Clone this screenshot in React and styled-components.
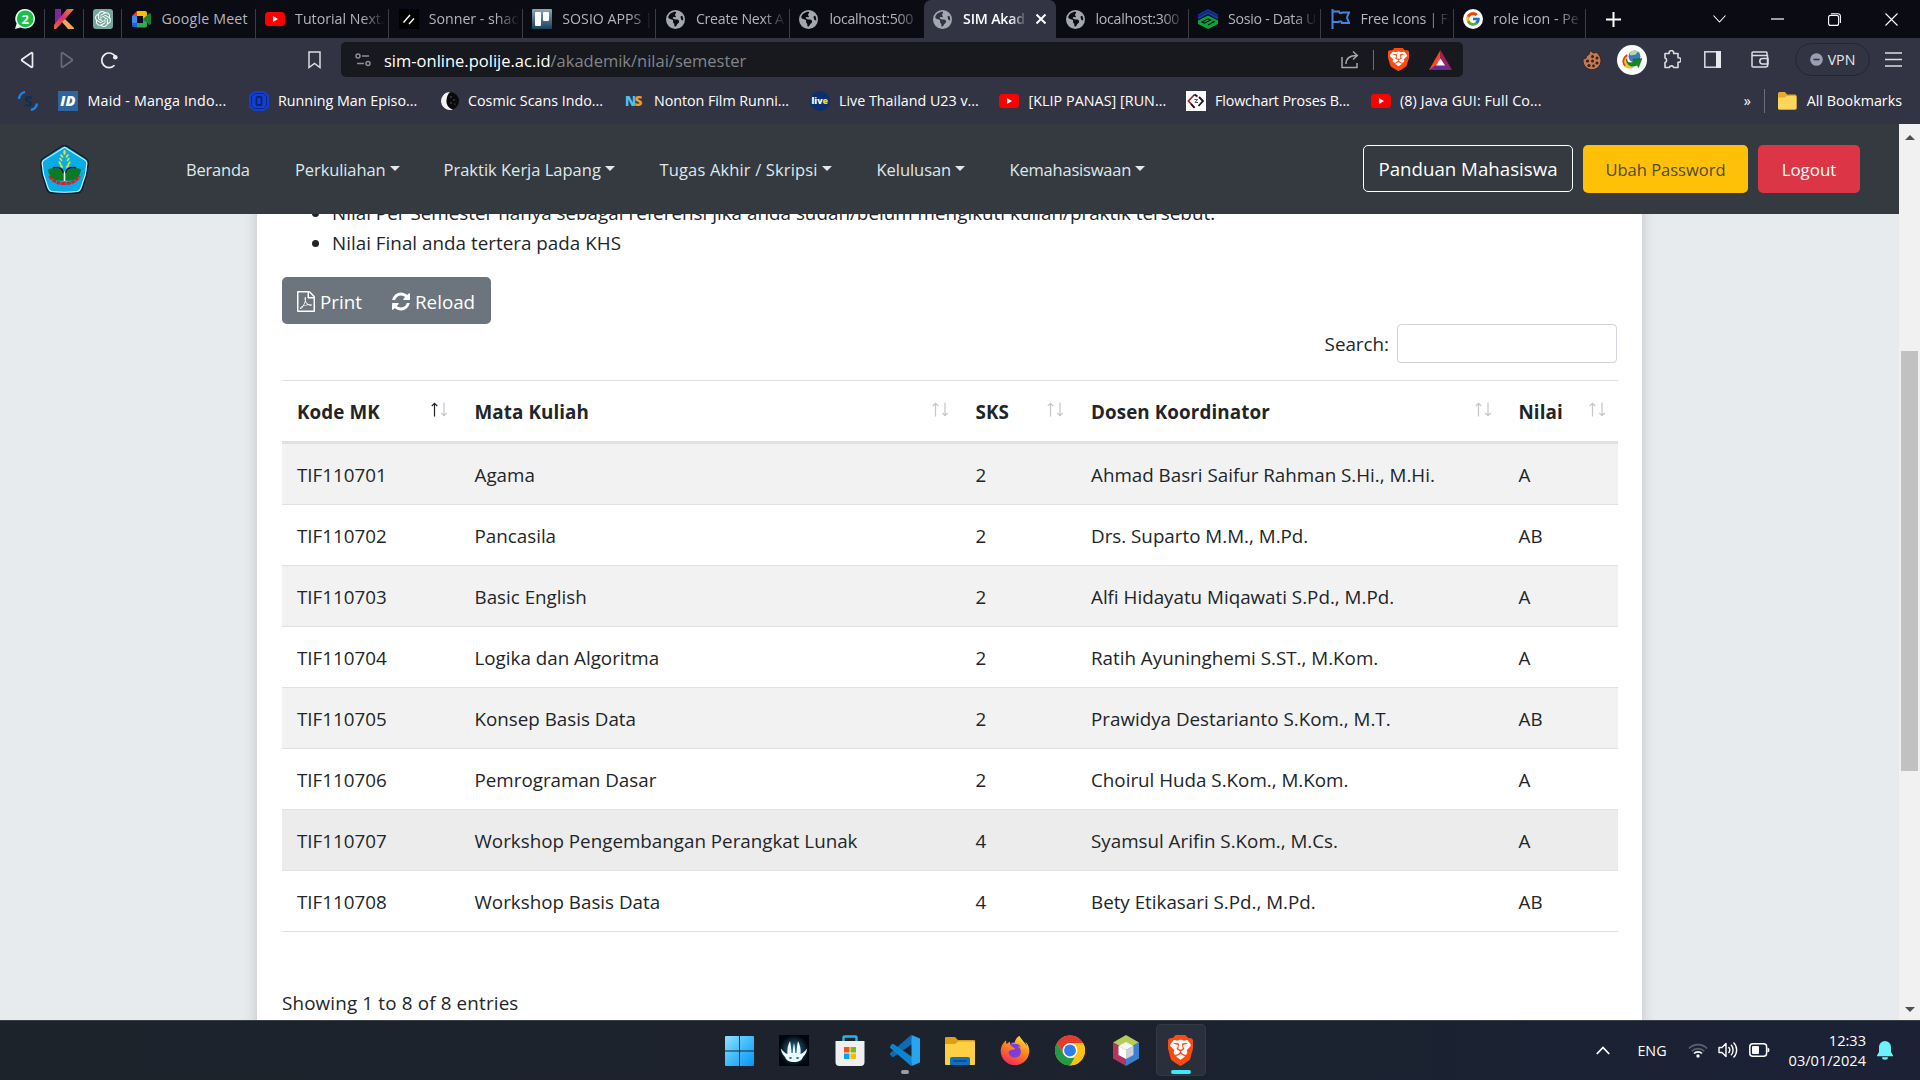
import React from "react";
import styled, { createGlobalStyle, css } from "styled-components";
import { FcGoogle } from "react-icons/fc";
import { FaEarthAmericas, FaFirefoxBrowser } from "react-icons/fa6";
import { SiBrave, SiOpenai } from "react-icons/si";

const Global = createGlobalStyle`
  * { box-sizing: border-box; }
  body { margin: 0; background: #e8ebee; overflow: hidden; }
  svg { display: block; flex: none; }
`;

const font = `"Open Sans", "Noto Sans", sans-serif`;

const Screen = styled.div`
  width: 1920px;
  height: 1080px;
  display: flex;
  flex-direction: column;
  font-family: ${font};
  overflow: hidden;
  white-space: nowrap;
`;

/* ---------- tab strip ---------- */
const TabStrip = styled.div`
  height: 38px;
  flex: none;
  background: #0b0b14;
  display: flex;
  align-items: stretch;
`;
const PinnedTab = styled.div`
  width: ${(p) => p.$w}px;
  padding-left: ${(p) => p.$pad}px;
  display: flex;
  align-items: center;
  background: linear-gradient(#3d3d46, #3d3d46) right bottom / 1px 29px no-repeat;
`;
const Tab = styled.div`
  width: ${(p) => p.$w}px;
  padding: 0 ${(p) => (p.$active ? 10 : 5)}px 0 9.5px;
  display: flex;
  align-items: center;
  gap: 10px;
  color: #b4b5bb;
  ${(p) =>
    p.$active
      ? css`
          background: #323443;
          border-radius: 7px 7px 0 0;
          color: #fff;
          font-weight: 600;
        `
      : p.$plain
      ? ""
      : css`
          background: linear-gradient(#3d3d46, #3d3d46) right bottom / 1px 29px no-repeat;
        `}
`;
const TabIcon = styled.div`
  width: 20px;
  flex: none;
`;
const TabTitle = styled.span`
  flex: 1;
  min-width: 0;
  overflow: hidden;
  font-size: 14.2px;
  letter-spacing: ${(p) => p.$ls || 0}px;
  line-height: 20px;
  mask-image: ${(p) => (p.$whole ? "none" : "linear-gradient(90deg, #000 75%, transparent 102%)")};
`;
const WindowControls = styled.div`
  flex: 1;
  display: grid;
  grid-template-columns: 54px 1fr 57px 57px 57px;
  align-items: center;
  justify-items: center;
  color: #fff;
`;
const PushRight = styled.div`
  justify-self: end;
  padding-right: 23px;
`;

/* ---------- toolbar ---------- */
const Toolbar = styled.div`
  height: 43px;
  flex: none;
  background: #323443;
  display: flex;
  align-items: center;
  color: #e9e9ee;
  padding-left: 20px;
`;
const NavButtons = styled.div`
  display: flex;
  align-items: center;
  gap: 26px;
  width: 288px;
`;
const BookmarkHolder = styled.div`
  width: 33px;
  display: flex;
`;
const AddressBar = styled.div`
  width: 1122px;
  height: 35px;
  border-radius: 5px;
  background: #17191f;
  display: flex;
  align-items: center;
  padding: 0 11px 0 14px;
`;
const Url = styled.div`
  flex: 1;
  margin-left: 13px;
  padding-top: 1px;
  font-size: 16.5px;
  color: #83858a;
  b { font-weight: 400; color: #fff; }
`;
const AddressActions = styled.div`
  display: flex;
  align-items: center;
  color: #a5a6ac;
`;
const Divider = styled.i`
  width: 1px;
  height: ${(p) => p.$h}px;
  background: #6b6d78;
  margin: 0 ${(p) => p.$r}px 0 ${(p) => p.$l}px;
`;
const Extensions = styled.div`
  flex: 1;
  display: flex;
  align-items: center;
  padding-left: 119px;
`;
const Extension = styled.div`
  width: ${(p) => p.$w}px;
  display: flex;
  justify-content: center;
`;
const IdmBadge = styled.div`
  width: 30px;
  height: 30px;
  border-radius: 50%;
  background: #fff;
  display: flex;
  align-items: center;
  justify-content: center;
`;
const VpnPill = styled.div`
  width: 75px;
  height: 33px;
  margin-left: 16px;
  border-radius: 17px;
  border: 1px solid #232532;
  display: flex;
  align-items: center;
  justify-content: center;
  gap: 5px;
  font-size: 14.2px;
`;
const MenuButton = styled.div`
  margin-left: 15px;
`;

/* ---------- bookmarks ---------- */
const BookmarkBar = styled.div`
  height: 43px;
  flex: none;
  background: #323443;
  display: flex;
  align-items: center;
  padding: 0 18px 4px;
  color: #fff;
  font-size: 14.3px;
`;
const Bookmark = styled.div`
  width: ${(p) => p.$w}px;
  display: flex;
  align-items: center;
  gap: 9.5px;
  letter-spacing: ${(p) => p.$ls || 0}px;
`;
const BookmarkEnd = styled.div`
  margin-left: auto;
  display: flex;
  align-items: center;
`;
const FolderLabel = styled.span`
  margin-left: 10px;
`;

/* ---------- page ---------- */
const Viewport = styled.div`
  height: 896px;
  flex: none;
  display: flex;
  overflow: hidden;
`;
const Page = styled.div`
  flex: 1;
  display: flex;
  flex-direction: column;
  min-width: 0;
`;
const Navbar = styled.nav`
  height: 90px;
  flex: none;
  position: relative;
  z-index: 1;
  background: #343a40;
  display: flex;
  align-items: center;
  padding: 0 39px 0 39.5px;
`;
const NavLinks = styled.div`
  display: flex;
  flex: 1;
  margin-left: 97.5px;
  padding-top: 1px;
`;
const NavLink = styled.div`
  width: ${(p) => p.$w}px;
  display: flex;
  align-items: center;
  gap: 4px;
  font-size: 16.5px;
  color: #dfe8ec;
  letter-spacing: ${(p) => p.$ls || 0}px;
`;
const Caret = styled.i`
  border: 5px solid transparent;
  border-top-color: currentColor;
  border-bottom: 0;
  margin-top: -3px;
`;
const NavActions = styled.div`
  display: flex;
  gap: 10px;
`;
const NavButton = styled.div`
  width: ${(p) => p.$w}px;
  height: ${(p) => p.$h || 48}px;
  border-radius: 5px;
  display: flex;
  align-items: center;
  justify-content: center;
  font-size: ${(p) => p.$size || 16.5}px;
  background: ${(p) => p.$bg || "transparent"};
  color: ${(p) => p.$fg || "#fff"};
  border: ${(p) => (p.$outline ? "1px solid #fff" : "0")};
`;
const Main = styled.main`
  flex: 1;
  min-height: 0;
  background: #e8ebee;
  overflow: hidden;
  display: flex;
  justify-content: center;
`;
const Card = styled.section`
  width: 1385px;
  height: 860px;
  margin-top: -16px;
  padding: 0 24px 0 25px;
  background: #fff;
  box-shadow: 0 0 12px rgba(0, 0, 0, 0.18);
  color: #212529;
  font-size: 18.8px;
  line-height: 30px;
`;
const Notes = styled.ul`
  margin: 0 0 19px;
  padding-left: 50px;
  line-height: 30px;
  letter-spacing: 0.03px;
`;
const ButtonGroup = styled.div`
  width: 209px;
  height: 47px;
  border-radius: 5px;
  background: #6c757d;
  color: #fff;
  display: flex;
  align-items: center;
  padding: 2px 0 0 15px;
`;
const GroupButton = styled.div`
  width: ${(p) => p.$w}px;
  display: flex;
  align-items: center;
  gap: 5px;
`;
const SearchRow = styled.div`
  display: flex;
  justify-content: flex-end;
  align-items: center;
  gap: 8px;
`;
const SearchInput = styled.div`
  width: 220px;
  height: 39px;
  border: 1px solid #ced4da;
  border-radius: 4px;
  margin-right: 1px;
`;
const Table = styled.div`
  margin-top: 17px;
  border-top: 1px solid #dee2e6;
`;
const Row = styled.div`
  display: grid;
  grid-template-columns: 177.5px 501px 115.5px 427.5px 114.5px;
  align-items: center;
  height: ${(p) => (p.$head ? 63 : 61)}px;
  border-bottom: ${(p) => (p.$head ? 3 : 1)}px solid #dee2e6;
  background: ${(p) => p.$bg || "#fff"};
  font-weight: ${(p) => (p.$head ? 700 : 400)};
  letter-spacing: ${(p) => (p.$head ? 0.1 : 0)}px;
`;
const Cell = styled.div`
  padding: 1px 12px 0 15px;
  display: flex;
  justify-content: space-between;
  align-items: center;
`;
const Summary = styled.div`
  margin-top: 56px;
  letter-spacing: 0.17px;
`;
const Scrollbar = styled.div`
  width: 21px;
  background: #f1f1f1;
  display: flex;
  flex-direction: column;
  align-items: center;
  justify-content: space-between;
  padding: 11px 0 8px;
`;
const Thumb = styled.div`
  width: 17px;
  height: 420px;
  margin-bottom: 25px;
  background: #c1c1c1;
`;
const Arrow = styled.i`
  border: 5px solid transparent;
  border-${(p) => (p.$up ? "bottom" : "top")}: 5px solid #505050;
  border-${(p) => (p.$up ? "top" : "bottom")}: 0;
`;

/* ---------- taskbar ---------- */
const Taskbar = styled.footer`
  height: 60px;
  flex: none;
  border-top: 1px solid #3a4048;
  background: linear-gradient(90deg, #1c232b 0%, #1d222c 45%, #1a2231 75%, #1c2136 100%);
  display: grid;
  grid-template-columns: 1fr auto 1fr;
  align-items: center;
  color: #fff;
`;
const Apps = styled.div`
  grid-column: 2;
  display: flex;
  gap: 5.2px;
`;
const AppButton = styled.div`
  width: 50px;
  height: 52px;
  margin-bottom: 1px;
  border-radius: 5px;
  display: flex;
  flex-direction: column;
  align-items: center;
  padding-top: 11px;
  background: ${(p) => (p.$active ? "#29303b" : "transparent")};
  box-shadow: ${(p) => (p.$active ? "inset 0 0 0 1px #333a45" : "none")};
`;
const Indicator = styled.i`
  width: ${(p) => p.$w}px;
  height: 4px;
  border-radius: 2px;
  margin-top: 4px;
  background: ${(p) => p.$c};
`;
const Tray = styled.div`
  display: flex;
  align-items: center;
  justify-content: flex-end;
  padding: 0 27px 1px 0;
  font-size: 14.3px;
`;
const TrayItem = styled.div`
  margin-right: ${(p) => p.$r}px;
`;
const Clock = styled.div`
  text-align: right;
  line-height: 20px;
  font-size: 14.6px;
  margin-right: 11px;
`;

/* ---------- drawings ---------- */
const YouTube = () => (
  <svg width="20" height="20" viewBox="0 0 20 20">
    <rect y="3" width="20" height="14" rx="3.500" fill="#f00" />
    <path d="M8 7v6l5-3z" fill="#fff" />
  </svg>
);
const GlobeIcon = () => <FaEarthAmericas size={19} color="#a3a7b0" />;
const WhatsApp = () => (
  <svg width="20" height="20" viewBox="0 0 20 20">
    <path d="M10.2 0a9.8 9.8 0 1 1-4.7 18.4L0 20l1.6-5.3A9.8 9.8 0 0 1 10.2 0z" fill="#eafff0" />
    <circle cx="10.2" cy="9.8" r="8.4" fill="#18c145" />
    <text x="10.2" y="14.6" textAnchor="middle" fontSize="13" fontWeight="700" fill="#fff" fontFamily="Open Sans">2</text>
  </svg>
);
const KLogo = () => (
  <svg width="20" height="20" viewBox="0 0 20 20">
    <defs>
      <linearGradient id="kg" x1="0" y1="1" x2="1" y2="0">
        <stop offset="0" stopColor="#f0603c" />
        <stop offset=".5" stopColor="#d6336c" />
        <stop offset="1" stopColor="#e8833a" />
      </linearGradient>
    </defs>
    <path d="M1 0h6v12l-6 6z" fill="#80259a" />
    <path d="M13 0h7L6 16l-4 4H0v-4z" fill="url(#kg)" />
    <path d="M11 10l9 9v1h-6L8 13z" fill="#f5a45c" />
  </svg>
);
const GptIcon = () => (
  <svg width="20" height="20" viewBox="0 0 20 20">
    <rect width="20" height="20" rx="3" fill="#74a99b" />
    <SiOpenai x="2" y="2" size={16} color="#fff" />
  </svg>
);
const MeetIcon = () => (
  <svg width="19" height="20" viewBox="0 0 19 20">
    <path d="M0 7l5-5v5z" fill="#ea4335" />
    <path d="M5 2h8a2 2 0 0 1 2 2v4l-4 3V7H5z" fill="#fbbc04" />
    <path d="M0 7h5v7H0z" fill="#4285f4" />
    <path d="M0 14h5v4H1.500A1.500 1.500 0 0 1 0 16.500z" fill="#1967d2" />
    <path d="M5 14h6v-4l4 3v4a1.500 1.500 0 0 1-1.500 1.500H5z" fill="#34a853" />
    <path d="M11 10l6-5.500c.8-.6 2-.2 2 .8v9.400c0 1-1.200 1.400-2 .8z" fill="#188038" />
  </svg>
);
const SonnerIcon = () => (
  <svg width="20" height="20" viewBox="0 0 20 20">
    <rect width="20" height="20" fill="#000" />
    <path d="M4.500 13.500l6.500-7.500M10 15l5-5.500" stroke="#fff" strokeWidth="1.400" />
  </svg>
);
const TrelloIcon = () => (
  <svg width="20" height="20" viewBox="0 0 20 20">
    <defs>
      <linearGradient id="tr" x1="0" y1="0" x2="0" y2="1">
        <stop offset="0" stopColor="#8aa9b8" />
        <stop offset="1" stopColor="#16435c" />
      </linearGradient>
    </defs>
    <rect width="20" height="20" rx="1" fill="url(#tr)" />
    <rect x="3" y="3" width="6" height="14" rx="1" fill="#fff" />
    <rect x="11" y="3" width="6" height="9" rx="1" fill="#fff" />
  </svg>
);
const SosioIcon = () => (
  <svg width="20" height="20" viewBox="0 0 20 20">
    <path d="M10 0l10 5.500v5L10 5 0 10.500v-5z" fill="#123aa5" />
    <path d="M0 7.500L10 2.300l10 5.200" fill="none" stroke="#0b1a55" strokeWidth=".8" />
    <path d="M10 6.500l10 5v3.500l-10 5-10-5v-3.500z" fill="#0aa63a" />
    <path d="M4 13l6-3.200 2.500 1.200-6 3.200zM10 16l6-3.200-1.500-.8" fill="none" stroke="#0b0b14" strokeWidth="1.200" />
  </svg>
);
const FlagIcon = () => (
  <svg width="19" height="20" viewBox="0 0 19 20" fill="none" stroke="#3f87e0" strokeWidth="2">
    <path d="M1.500 0v20M2 2.500h6c0 2 2 2 3 1h7l-2 5 2 5.500h-7c0-1.500-2-2-4-1H2" />
  </svg>
);
const GoogleIcon = () => (
  <svg width="20" height="20" viewBox="0 0 20 20">
    <circle cx="10" cy="10" r="10" fill="#fff" />
    <FcGoogle x="2" y="2" size={16} />
  </svg>
);
const BackIcon = ({ dim }) => (
  <svg width="14" height="18" viewBox="0 0 14 18" fill="none" stroke={dim ? "#686a76" : "#eeeef2"} strokeWidth="1.700" strokeLinejoin="round">
    <path d={dim ? "M1.500 2.500v13c0 .8.800 1 1.400.5l9-6.200c.6-.5.6-1.100 0-1.600l-9-6.200c-.6-.5-1.400-.3-1.400.5z" : "M12.500 2.500v13c0 .8-.8 1-1.400.5l-9-6.200c-.6-.5-.6-1.100 0-1.600l9-6.200c.6-.5 1.400-.3 1.400.5z"} />
  </svg>
);
const ReloadIcon = () => (
  <svg width="18" height="18" viewBox="0 0 18 18" fill="none" stroke="#eeeef2" strokeWidth="1.700">
    <path d="M14.500 14.200A7.300 7.300 0 1 1 15.600 6" />
    <circle cx="15.300" cy="6.300" r="2.300" fill="#eeeef2" stroke="none" />
  </svg>
);
const BookmarkIcon = () => (
  <svg width="13" height="18" viewBox="0 0 13 18" fill="none" stroke="#dcdce2" strokeWidth="1.500">
    <path d="M1 1h11v15.500l-5.500-4-5.500 4z" />
  </svg>
);
const SiteIcon = () => (
  <svg width="16" height="16" viewBox="0 0 16 16" fill="none" stroke="#8d8f96" strokeWidth="1.500">
    <circle cx="3" cy="4" r="2" />
    <circle cx="13" cy="11.500" r="2" />
    <path d="M7 4h7M2 11.500h7" />
  </svg>
);
const ShareIcon = () => (
  <svg width="18" height="19" viewBox="0 0 18 19" fill="none" stroke="#a5a6ac" strokeWidth="1.500">
    <path d="M1 7v10.500h15V13" />
    <path d="M5 14c0-6 4-8.500 11-8.500M12 1.500l4.300 4-4.300 4" />
  </svg>
);
const BraveShield = ({ w, h }) => (
  <svg width={w} height={h} viewBox="2.500 0 19 24" preserveAspectRatio="none">
    <path d="M7 2h10l4 5-3 12-6 4-6-4L3.500 7z" fill="#fff" />
    <SiBrave size={24} color="#fb4b12" />
  </svg>
);
const BatIcon = () => (
  <svg width="23" height="20" viewBox="0 0 23 20">
    <path d="M11.500 0L0 20l11.500-5z" fill="#ff4724" />
    <path d="M11.500 0L23 20l-11.500-5z" fill="#9e1f63" />
    <path d="M0 20h23l-7-5H7z" fill="#662d91" />
    <path d="M11.500 8.500L7 15.500h9z" fill="#fff" />
  </svg>
);
const CookieIcon = () => (
  <svg width="20" height="20" viewBox="0 0 20 20">
    <path d="M8 1c1.500-.5 1.500 2 4 2 2-.5 3-1 4.500 1.500A9 9 0 1 1 1 11c-.5-2 1-2 2.500-2.500S4 5 6 5s1-3.500 2-4z" fill="#c47b55" stroke="#35231e" />
    <g fill="#33211c">
      <circle cx="10.500" cy="6.500" r="1.500" /><circle cx="15" cy="8" r="1.500" /><circle cx="5.500" cy="11" r="1.600" />
      <circle cx="10.500" cy="11" r="1.500" /><circle cx="7" cy="15.500" r="1.600" /><circle cx="15" cy="13" r="1.600" /><circle cx="11.500" cy="16" r="1.400" />
    </g>
  </svg>
);
const IdmIcon = () => (
  <svg width="20" height="20" viewBox="0 0 20 20">
    <circle cx="12.500" cy="6.500" r="6" fill="#3f78b8" />
    <path d="M8 3c2-3 6-3 8-1-2 1-2 3-4 3s-2 1-4 0z" fill="#b9d7a5" />
    <path d="M6 4C0 7-1 13 3 17c3 2 7 2 9 0-4 0-8-4-6-13z" fill="#e8c227" />
    <path d="M5 5c-4 3-5 7-2 11" fill="none" stroke="#d8432b" strokeWidth="1.600" />
    <path d="M4.500 9c.5 4 4 5 8 2.500L11 9.500l9-1-3.500 9-1.500-2.500c-5 3-10.500.500-10.500-6z" fill="#14891f" stroke="#0b4f16" strokeWidth=".5" />
  </svg>
);
const PuzzleIcon = () => (
  <svg width="18" height="19" viewBox="0 0 18 19" fill="none" stroke="#dcdce2" strokeWidth="1.600" strokeLinejoin="round">
    <path d="M2 3.500h4.200a2.300 2.300 0 1 1 4.400 0H15v4.300a2.300 2.300 0 1 1 0 4.400v5.300h-4.300a2.300 2.300 0 0 0-4.400 0H2v-5a2.300 2.300 0 0 0 0-4.400z" />
  </svg>
);
const SidebarIcon = () => (
  <svg width="17" height="17" viewBox="0 0 17 17">
    <rect x=".8" y=".8" width="15.400" height="15.400" fill="none" stroke="#dcdce2" strokeWidth="1.500" />
    <rect x="12" y="0" width="5" height="17" fill="#e9e9ee" />
  </svg>
);
const WalletIcon = () => (
  <svg width="18" height="17" viewBox="0 0 18 17" fill="none" stroke="#dcdce2" strokeWidth="1.500">
    <path d="M16 5V1.800A1 1 0 0 0 15 1H2a1 1 0 0 0-1 1v13a1 1 0 0 0 1 1h13a1 1 0 0 0 1-1M1 4.500h15.500V16" />
    <path d="M17 7.500h-5.500a2.700 2.700 0 0 0 0 5.400H17z" />
  </svg>
);
const MinusDot = () => (
  <svg width="13" height="13" viewBox="0 0 13 13">
    <circle cx="6.500" cy="6.500" r="6.300" fill="#9b9db0" />
    <path d="M3.500 6.500h6" stroke="#323443" strokeWidth="1.600" />
  </svg>
);
const HamburgerIcon = () => (
  <svg width="17" height="15" viewBox="0 0 17 15" stroke="#dcdce2" strokeWidth="1.500">
    <path d="M0 1h17M0 7.500h17M0 14h17" />
  </svg>
);
const SIcon = () => (
  <svg width="20" height="20" viewBox="0 0 20 20">
    <path d="M1 8A8 8 0 0 1 7 1" fill="none" stroke="#1686f5" strokeWidth="2.200" />
    <path d="M19 12.500a8 8 0 0 1-6 6.500" fill="none" stroke="#1686f5" strokeWidth="2.200" />
    <text x="10" y="15.500" textAnchor="middle" fontSize="15" fontWeight="800" fill="#14304f" fontFamily="Open Sans">S</text>
  </svg>
);
const IdIcon = () => (
  <svg width="20" height="20" viewBox="0 0 20 20">
    <rect width="20" height="20" fill="#2e64a0" />
    <text x="10" y="15" textAnchor="middle" fontSize="14.500" fontWeight="800" fontStyle="italic" fill="#fff" fontFamily="Open Sans">ID</text>
  </svg>
);
const RunIcon = () => (
  <svg width="20" height="20" viewBox="0 0 20 20">
    <path d="M5 0h10l5 4v12l-5 4H5l-5-4V4z" fill="#123fd0" />
    <path d="M5.500 2.500h9l3 2.500v10l-3 2.500h-9l-3-2.500V5z" fill="none" stroke="#0a2a86" />
    <rect x="7.500" y="6" width="5" height="8" rx="1" fill="none" stroke="#0a2470" strokeWidth="1.800" />
  </svg>
);
const MoonIcon = () => (
  <svg width="20" height="20" viewBox="0 0 20 20">
    <circle cx="11" cy="10" r="9" fill="#0a0a0c" />
    <path d="M11 1a9 9 0 1 0 3 17.500C9 17 7 13 7.500 9S9 3 11 1z" fill="#f3f3f3" />
    <g fill="#777"><circle cx="12" cy="6" r=".7" /><circle cx="15" cy="9" r=".7" /><circle cx="12" cy="12" r=".7" /><circle cx="16" cy="13" r=".6" /></g>
  </svg>
);
const NsIcon = () => (
  <svg width="20" height="20" viewBox="0 0 20 20" fontFamily="Open Sans" fontWeight="800" fontSize="13.500">
    <text x="0" y="15" fill="#4cc3f2">N</text>
    <text x="9.500" y="15" fill="#f29a2e">S</text>
  </svg>
);
const LiveIcon = () => (
  <svg width="20" height="20" viewBox="0 0 20 20">
    <circle cx="10" cy="10" r="10" fill="#0c2f6e" />
    <text x="9.800" y="13" textAnchor="middle" fontSize="8.800" fontWeight="800" fill="#fff" fontFamily="Open Sans">liv<tspan fill="#f6d51f">e</tspan></text>
  </svg>
);
const FlowIcon = () => (
  <svg width="20" height="20" viewBox="0 0 20 20">
    <rect width="20" height="20" fill="#fff" />
    <path d="M8.500 3.500L2.500 10l6 6.500" fill="none" stroke="#a3232b" strokeWidth="1.700" />
    <path d="M13 6l4 4-4.500 5M5 13l3.500 4M8.500 3.500l3 2" fill="none" stroke="#151515" strokeWidth="1.800" />
    <path d="M8.500 8.500h3l-2.500 3h3" fill="none" stroke="#555" strokeWidth="1" />
  </svg>
);
const FolderIcon = () => (
  <svg width="20" height="18" viewBox="0 0 20 18">
    <path d="M1 1.500A1.500 1.500 0 0 1 2.500 0H8l2 2.500h8A1.500 1.500 0 0 1 19.500 4v12a1.500 1.500 0 0 1-1.500 1.500H2.500A1.500 1.500 0 0 1 1 16z" fill="#e8a92d" />
    <path d="M1 5.500h6.500l2-1.500h9A1 1 0 0 1 19.500 5v11a1.500 1.500 0 0 1-1.500 1.500H2.500A1.500 1.500 0 0 1 1 16z" fill="#ffd65c" />
  </svg>
);
const Leaf = ({ t }) => <ellipse cx="0" cy="0" rx="2.100" ry=".9" transform={t} />;
const CampusLogo = () => (
  <svg width="49" height="49" viewBox="0.400 0.300 48.200 47.900" preserveAspectRatio="none">
    <path d="M24.500 1q2 0 3.500 1.200l17.500 11.300q2.200 1.500 2.400 4L46.500 29l-4.500 14q-1 3.200-4 4-13.500 1.500-27 0-3-.8-4-4L2.500 29 1.100 17.500q.2-2.500 2.400-4L21 2.200Q22.500 1 24.500 1z" fill="#0aace6" stroke="#14181c" strokeWidth="1.300" />
    <path d="M24.500 2.500L45 15.300q1.500 1 1.400 3.500L45 29l-4.500 13.500q-1 2.800-3.500 3.200-12.500 1.500-25 0-2.500-.4-3.500-3.200L4 29 2.600 18.800q-.1-2.500 1.400-3.500z" fill="none" stroke="#d9f2fb" strokeWidth="1" />
    <g fill="#e3e43a">
      <ellipse cx="24.500" cy="7.500" rx="1.100" ry="2.500" />
      {[11, 14.500, 18].map((y, i) => (
        <g key={y}>
          <Leaf t={`translate(${21.8 - i * 0.9} ${y}) rotate(50)`} />
          <Leaf t={`translate(${27.2 + i * 0.9} ${y}) rotate(-50)`} />
        </g>
      ))}
      <Leaf t="translate(21.500 21) rotate(40)" />
      <Leaf t="translate(27.500 21) rotate(-40)" />
    </g>
    <path d="M10 30.500q4 7.500 14.500 7.500T39 30.500" fill="none" stroke="#d51f2b" strokeWidth="3" strokeDasharray="4 .7" />
    <path d="M23.500 35C14 36 9.500 32 8 24c6-2 13-.5 15.500 3z" fill="#0b7a22" />
    <path d="M25.500 35C35 36 39.500 32 41 24c-6-2-13-.5-15.500 3z" fill="#0b7a22" />
    <path d="M13 22.500q9-1.500 10.500 5M36 22.500q-9-1.500-10.500 5" fill="none" stroke="#10161a" strokeWidth="1.400" />
    <path d="M24.500 26v9.500" stroke="#e8f3ea" strokeWidth="1.300" />
  </svg>
);
const PdfIcon = () => (
  <svg width="18" height="21" viewBox="0 0 1536 1792" fill="#fff">
    <path d="M1468 380q28 28 48 76t20 88v1152q0 40-28 68t-68 28h-1344q-40 0-68-28t-28-68v-1600q0-40 28-68t68-28h896q40 0 88 20t76 48zm-444-244v376h376q-10-29-22-41l-313-313q-12-12-41-22zm384 1528v-1024h-416q-40 0-68-28t-28-68v-416h-768v1536h1280zm-514-593q33 26 84 56 59-7 117-7 147 0 177 49 16 22 2 52 0 1-1 2l-2 2v1q-6 38-71 38-48 0-115-20t-130-53q-221 24-392 83-153 262-242 262-15 0-28-7l-24-12q-1-1-6-5-10-10-6-36 9-40 56-91.500t132-96.500q14-9 23 6 2 2 2 4 52-85 107-197 68-136 104-262-24-82-30.500-159.500t6.500-127.500q11-40 42-40h22q23 0 35 15 18 21 9 68-2 6-4 8 1 3 1 8v30q-2 123-14 192 55 164 146 238zm-576 411q52-24 137-158-51 40-87.500 84t-49.500 74zm398-920q-15 42-2 132 1-7 7-44 0-3 7-43 1-4 4-8-1-1-1-2t-1-2-1-3q-1-22-13-36 0 1-1 2v2zm-124 661q135-54 284-81-2-1-13-9.500t-16-13.500q-76-67-127-176-27 86-83 197-30 56-45 83zm646-16q-24-24-140-24 76 28 124 28 14 0 18-1 0-1-2-3z" />
  </svg>
);
const RefreshIcon = () => (
  <svg width="18" height="21" viewBox="0 0 1536 1792" fill="#fff">
    <path d="M1511 1056q0 5-1 7-64 268-268 434.500t-478 166.500q-146 0-282.500-55t-243.500-157l-129 129q-19 19-45 19t-45-19-19-45v-448q0-26 19-45t45-19h448q26 0 45 19t19 45-19 45l-137 137q71 66 161 102t187 36q134 0 250-65t186-179q11-17 53-117 8-23 30-23h192q13 0 22.500 9.500t9.500 22.500zm25-800v448q0 26-19 45t-45 19h-448q-26 0-45-19t-19-45 19-45l138-138q-148-137-349-137-134 0-250 65t-186 179q-11 17-53 117-8 23-30 23h-199q-13 0-22.500-9.500t-9.500-22.500v-7q65-268 270-434.500t480-166.500q146 0 284 55.500t245 156.500l130-129q19-19 45-19t45 19 19 45z" />
  </svg>
);
const SortWrap = styled.span`
  margin-top: -5px;
`;
const SortIcon = ({ asc }) => (
  <SortWrap>
    <svg width="17" height="15" viewBox="0 0 17 15" fill="none" strokeWidth="1.200">
      <path d="M3.500 14.500V1.500M.8 4l2.700-2.700L6.200 4" stroke={asc ? "#212529" : "#c4c6c8"} />
      <path d="M13 .5v13M10.300 11l2.700 2.700 2.700-2.700" stroke="#c4c6c8" />
    </svg>
  </SortWrap>
);

const WinIcon = () => (
  <svg width="29" height="31" viewBox="0 0 29 31">
    <defs>
      <linearGradient id="wg" x1="0" y1="0" x2="1" y2="1">
        <stop offset="0" stopColor="#8fe2ff" /><stop offset=".5" stopColor="#3fbcfb" /><stop offset="1" stopColor="#0a93f8" />
      </linearGradient>
    </defs>
    <path d="M0 2q0-1 1-1h13v14.500H0zM15 1h13q1 0 1 1v13.500H15zM0 16.500h14V31H1q-1 0-1-1zM15 16.500h14V30q0 1-1 1H15z" fill="url(#wg)" />
  </svg>
);
const OriIcon = () => (
  <svg width="30" height="31" viewBox="0 0 30 31">
    <defs>
      <radialGradient id="og"><stop offset="0" stopColor="#2f7c9a" /><stop offset="1" stopColor="#02040e" /></radialGradient>
    </defs>
    <rect width="30" height="31" fill="url(#og)" />
    <path d="M15 27c-5 0-8-2-9-5C3 19 2 16 2 13.500c2 3 4 4.500 6.500 5.500-.5-4 .2-9 2.500-13 1 4 1.200 8 1.500 12h1.200c.3-4 .5-7 1.300-10 .8 3 1 6 1.300 10h1.200c.3-4 .5-8 1.500-12 2.300 4 3 9 2.500 13 2.500-1 4.500-2.500 6.500-5.500 0 2.500-1 5.500-4 8.500-1 3-4 5-9 5z" fill="#eafaff" />
    <ellipse cx="11.500" cy="23" rx="1.400" ry=".9" fill="#2b6d88" /><ellipse cx="18.500" cy="23" rx="1.400" ry=".9" fill="#2b6d88" />
  </svg>
);
const StoreIcon = () => (
  <svg width="30" height="31" viewBox="0 0 30 31">
    <path d="M8.500 7V2.500q0-1 1-1h11q1 0 1 1V7" fill="none" stroke="#29b3ee" strokeWidth="2.400" />
    <path d="M.500 6h29v21q0 4-4 4h-21q-4 0-4-4z" fill="#efefef" />
    <path d="M9 12h5.500v5.500H9z" fill="#f1511b" /><path d="M15.500 12H21v5.500h-5.500z" fill="#80bb03" />
    <path d="M9 18.500h5.500V24H9z" fill="#05a6f0" /><path d="M15.500 18.500H21V24h-5.500z" fill="#fcba08" />
  </svg>
);
const CodeIcon = () => (
  <svg width="30" height="31" viewBox="0 0 30 31">
    <path d="M0 19.500q-.5-.8.300-1.500L21 0l2 8.500L3.500 22q-.8.500-1.500-.2z" fill="#0a6cb5" />
    <path d="M0 11.500q-.5.800.3 1.500L21 31l2-8.500L3.500 9q-.8-.5-1.500.2z" fill="#0f83cd" />
    <path d="M21.500 0L30 3.500v24L21.500 31z" fill="#2ba4f0" />
  </svg>
);
const ExplorerIcon = () => (
  <svg width="30" height="31" viewBox="0 0 30 31">
    <path d="M0 3q0-1 1-1h9l3 3h16q1 0 1 1v5H0z" fill="#dfa010" />
    <path d="M0 9h10l3-2.500h16q1 0 1 1V29q0 1-1 1H1q-1 0-1-1z" fill="#fdcf45" />
    <path d="M5 30v-6q0-2 2-2h16q2 0 2 2v6z" fill="#0f6fc2" />
    <path d="M8.500 26h13" stroke="#0a4684" strokeWidth="1.400" />
  </svg>
);
const FirefoxIcon = () => (
  <svg width="30" height="31" viewBox="0 0 30 31">
    <defs>
      <linearGradient id="fg" x1=".8" y1="0" x2=".3" y2="1">
        <stop offset="0" stopColor="#ffe23d" /><stop offset=".45" stopColor="#ff8a16" /><stop offset="1" stopColor="#f0285a" />
      </linearGradient>
    </defs>
    <circle cx="15" cy="16" r="9" fill="#7b3ddb" />
    <FaFirefoxBrowser x="0" y="0.500" size={30} fill="url(#fg)" />
  </svg>
);
const ChromeIcon = () => (
  <svg width="30" height="31" viewBox="0 0 30 30">
    <circle cx="15" cy="15" r="15" fill="#fbc116" />
    <path d="M2 7.500A15 15 0 0 1 28 7.500H15L8.500 18.800z" fill="#e33b2e" />
    <path d="M2 7.500L8.500 18.800 15 22.500h6.500L15 30A15 15 0 0 1 2 7.500z" fill="#229a47" />
    <path d="M21.500 18.700L15 30A15 15 0 0 0 28 7.500H15z" fill="#fbc116" />
    <circle cx="15" cy="15" r="7.400" fill="#fff" /><circle cx="15" cy="15" r="5.900" fill="#2f7de9" />
  </svg>
);
const CubeIcon = () => (
  <svg width="26" height="31" viewBox="0 0 26 31">
    <path d="M13 0l13 7.500-13 7-13-7z" fill="#b3cc5a" />
    <path d="M0 7.500l13 7V31L0 23.500z" fill="#b5345b" /><path d="M26 7.500l-13 7V31l13-7.500z" fill="#3c7fd0" />
    <path d="M13 7l7.500 4-7.500 4-7.500-4z" fill="#f5f7ee" /><path d="M5.500 11l7.500 4v9l-7.500-4z" fill="#fff" /><path d="M20.500 11L13 15v9l7.500-4z" fill="#ccd0d8" />
  </svg>
);
const WifiIcon = () => (
  <svg width="20" height="16" viewBox="0 0 20 16" fill="none" strokeWidth="1.700">
    <path d="M1 6.500a12.500 12.500 0 0 1 18 0" stroke="#5a6170" /><path d="M3.800 9.200a8.800 8.800 0 0 1 12.400 0" stroke="#5a6170" />
    <path d="M6 11.500a5.600 5.600 0 0 1 8 0" stroke="#fff" /><circle cx="10" cy="14" r="1.700" fill="#fff" />
  </svg>
);
const VolumeIcon = () => (
  <svg width="20" height="18" viewBox="0 0 20 18" fill="none" stroke="#fff" strokeWidth="1.400" strokeLinejoin="round">
    <path d="M1 6.500h3l4-4v13l-4-4H1z" /><path d="M10.500 6a4.500 4.500 0 0 1 0 6M13 3.800a7.500 7.500 0 0 1 0 10.400M15.500 1.500a10.500 10.500 0 0 1 0 15" />
  </svg>
);
const BatteryIcon = () => (
  <svg width="21" height="14" viewBox="0 0 21 14">
    <rect x=".8" y=".8" width="16.800" height="12.400" rx="3" fill="none" stroke="#fff" strokeWidth="1.500" />
    <rect x="3" y="3" width="7" height="8" rx="1" fill="#fff" /><path d="M18.500 4.500q2 .5 2 2.500t-2 2.500z" fill="#fff" />
  </svg>
);
const BellIcon = () => (
  <svg width="16" height="19" viewBox="0 0 16 19" fill="#6cf3fa">
    <path d="M8 0a6 6 0 0 1 6 6v5l2 3.500v.8H0v-.8L2 11V6a6 6 0 0 1 6-6zM5 16.300h6a3 2.500 0 0 1-6 0z" />
  </svg>
);

/* ---------- data ---------- */
const tabs = [
  { w: 133.6, icon: <MeetIcon />, title: "Google Meet", whole: true, ls: 0.2 },
  { w: 133.6, icon: <YouTube />, title: "Tutorial Next." },
  { w: 133.6, icon: <SonnerIcon />, title: "Sonner - shad" },
  { w: 133.6, icon: <TrelloIcon />, title: "SOSIO APPS |" },
  { w: 133.6, icon: <GlobeIcon />, title: "Create Next A", ls: -0.25 },
  { w: 133.6, icon: <GlobeIcon />, title: "localhost:500", plain: true, ls: -0.3 },
  { w: 132.5, icon: <GlobeIcon />, title: "SIM Akad", active: true, ls: -0.2 },
  { w: 132.5, icon: <GlobeIcon />, title: "localhost:300", ls: -0.3 },
  { w: 132.5, icon: <SosioIcon />, title: "Sosio - Data U", ls: -0.3 },
  { w: 132.5, icon: <FlagIcon />, title: "Free Icons | Fo", ls: -0.2 },
  { w: 132.5, icon: <GoogleIcon />, title: "role icon - Pe" },
];
const bookmarks = [
  { w: 40, icon: <SIcon /> },
  { w: 190.5, icon: <IdIcon />, title: "Maid - Manga Indo...", ls: 0.17 },
  { w: 190, icon: <RunIcon />, title: "Running Man Episo..." },
  { w: 186, icon: <MoonIcon />, title: "Cosmic Scans Indo..." },
  { w: 185, icon: <NsIcon />, title: "Nonton Film Runni...", ls: -0.05 },
  { w: 189.5, icon: <LiveIcon />, title: "Live Thailand U23 v..." },
  { w: 186.500, icon: <YouTube />, title: "[KLIP PANAS] [RUN...", ls: 0.05 },
  { w: 185, icon: <FlowIcon />, title: "Flowchart Proses B...", ls: -0.15 },
  { w: 190, icon: <YouTube />, title: "(8) Java GUI: Full Co...", ls: 0.1 },
];
const links = [
  { w: 109, title: "Beranda", plain: true, ls: -0.2 },
  { w: 148.5, title: "Perkuliahan", ls: -0.1 },
  { w: 216, title: "Praktik Kerja Lapang" },
  { w: 217, title: "Tugas Akhir / Skripsi", ls: 0.15 },
  { w: 133, title: "Kelulusan", ls: -0.05 },
  { w: 150, title: "Kemahasiswaan", ls: -0.2 },
];
const heads = ["Kode MK", "Mata Kuliah", "SKS", "Dosen Koordinator", "Nilai"];
const rows = [
  ["TIF110701", "Agama", "2", "Ahmad Basri Saifur Rahman S.Hi., M.Hi.", "A"],
  ["TIF110702", "Pancasila", "2", "Drs. Suparto M.M., M.Pd.", "AB"],
  ["TIF110703", "Basic English", "2", "Alfi Hidayatu Miqawati S.Pd., M.Pd.", "A"],
  ["TIF110704", "Logika dan Algoritma", "2", "Ratih Ayuninghemi S.ST., M.Kom.", "A"],
  ["TIF110705", "Konsep Basis Data", "2", "Prawidya Destarianto S.Kom., M.T.", "AB"],
  ["TIF110706", "Pemrograman Dasar", "2", "Choirul Huda S.Kom., M.Kom.", "A"],
  ["TIF110707", "Workshop Pengembangan Perangkat Lunak", "4", "Syamsul Arifin S.Kom., M.Cs.", "A"],
  ["TIF110708", "Workshop Basis Data", "4", "Bety Etikasari S.Pd., M.Pd.", "AB"],
];
const rowBg = (i) => (i === 6 ? "#ececec" : i % 2 ? "#fff" : "#f2f2f2");

export default function App() {
  return (
    <Screen>
      <Global />
      <TabStrip>
        <PinnedTab $w={45} $pad={15}><WhatsApp /></PinnedTab>
        <PinnedTab $w={39} $pad={9}><KLogo /></PinnedTab>
        <PinnedTab $w={38} $pad={9}><GptIcon /></PinnedTab>
        {tabs.map((t) => (
          <Tab key={t.title} $w={t.w} $active={t.active} $plain={t.plain}>
            <TabIcon>{t.icon}</TabIcon>
            <TabTitle $whole={t.whole} $ls={t.ls}>{t.title}</TabTitle>
            {t.active && (
              <svg width="10" height="10" viewBox="0 0 10 10" stroke="#fff" strokeWidth="2"><path d="M.5.5l9 9M9.500.500l-9 9" /></svg>
            )}
          </Tab>
        ))}
        <WindowControls>
          <svg width="15" height="15" viewBox="0 0 15 15" stroke="#fff" strokeWidth="2"><path d="M7.500 0v15M0 7.500h15" /></svg>
          <PushRight>
            <svg width="13" height="8" viewBox="0 0 13 8" fill="none" stroke="#fff" strokeWidth="1.100"><path d="M.5.500l6 6.500 6-6.500" /></svg>
          </PushRight>
          <svg width="13" height="2" viewBox="0 0 13 2"><path d="M0 1h13" stroke="#fff" strokeWidth="1.200" /></svg>
          <svg width="13" height="13" viewBox="0 0 13 13" fill="none" stroke="#fff" strokeWidth="1.100"><rect x=".6" y="2.400" width="10" height="10" rx="2" /><path d="M3 .7h7a2.400 2.400 0 0 1 2.400 2.400v7" /></svg>
          <svg width="13" height="13" viewBox="0 0 13 13" stroke="#fff" strokeWidth="1.100"><path d="M.5.5l12 12M12.500.500l-12 12" /></svg>
        </WindowControls>
      </TabStrip>

      <Toolbar>
        <NavButtons>
          <BackIcon />
          <BackIcon dim />
          <ReloadIcon />
        </NavButtons>
        <BookmarkHolder><BookmarkIcon /></BookmarkHolder>
        <AddressBar>
          <SiteIcon />
          <Url><b>sim-online.polije.ac.id</b>/akademik/nilai/semester</Url>
          <AddressActions>
            <ShareIcon />
            <Divider $h={20} $l={14} $r={14} />
            <BraveShield w={21} h={23} />
            <Divider $h={0} $l={19} $r={0} />
            <BatIcon />
          </AddressActions>
        </AddressBar>
        <Extensions>
          <Extension $w={20}><CookieIcon /></Extension>
          <Extension $w={59}><IdmBadge><IdmIcon /></IdmBadge></Extension>
          <Extension $w={22}><PuzzleIcon /></Extension>
          <Extension $w={58}><SidebarIcon /></Extension>
          <Extension $w={38}><WalletIcon /></Extension>
          <VpnPill><MinusDot />VPN</VpnPill>
          <MenuButton><HamburgerIcon /></MenuButton>
        </Extensions>
      </Toolbar>

      <BookmarkBar>
        {bookmarks.map((b, i) => (
          <Bookmark key={i} $w={b.w} $ls={b.ls}>{b.icon}{b.title}</Bookmark>
        ))}
        <BookmarkEnd>
          <span>»</span>
          <Divider $h={24} $l={13} $r={12} />
          <FolderIcon />
          <FolderLabel>All Bookmarks</FolderLabel>
        </BookmarkEnd>
      </BookmarkBar>

      <Viewport>
        <Page>
          <Navbar>
            <CampusLogo />
            <NavLinks>
              {links.map((l) => (
                <NavLink key={l.title} $w={l.w} $ls={l.ls}>{l.title}{!l.plain && <Caret />}</NavLink>
              ))}
            </NavLinks>
            <NavActions>
              <NavButton $w={210} $h={47} $size={18.7} $outline>Panduan Mahasiswa</NavButton>
              <NavButton $w={165} $bg="#ffc107" $fg="#4d4a33">Ubah Password</NavButton>
              <NavButton $w={102} $bg="#dc3545" $size={16.9}>Logout</NavButton>
            </NavActions>
          </Navbar>
          <Main>
            <Card>
              <Notes>
                <li>Nilai Per Semester hanya sebagai referensi jika anda sudah/belum mengikuti kuliah/praktik tersebut.</li>
                <li>Nilai Final anda tertera pada KHS</li>
              </Notes>
              <ButtonGroup>
                <GroupButton $w={95}><PdfIcon />Print</GroupButton>
                <GroupButton $w={90}><RefreshIcon />Reload</GroupButton>
              </ButtonGroup>
              <SearchRow>Search:<SearchInput /></SearchRow>
              <Table>
                <Row $head>
                  {heads.map((h, i) => (
                    <Cell key={h}>{h}<SortIcon asc={i === 0} /></Cell>
                  ))}
                </Row>
                {rows.map((r, i) => (
                  <Row key={r[0]} $bg={rowBg(i)}>
                    {r.map((c, j) => <Cell key={j}>{c}</Cell>)}
                  </Row>
                ))}
              </Table>
              <Summary>Showing 1 to 8 of 8 entries</Summary>
            </Card>
          </Main>
        </Page>
        <Scrollbar>
          <Arrow $up />
          <Thumb />
          <Arrow />
        </Scrollbar>
      </Viewport>

      <Taskbar>
        <Apps>
          <AppButton><WinIcon /></AppButton>
          <AppButton><OriIcon /></AppButton>
          <AppButton><StoreIcon /></AppButton>
          <AppButton><CodeIcon /><Indicator $w={8} $c="#9a9da3" /></AppButton>
          <AppButton><ExplorerIcon /></AppButton>
          <AppButton><FirefoxIcon /></AppButton>
          <AppButton><ChromeIcon /></AppButton>
          <AppButton><CubeIcon /></AppButton>
          <AppButton $active><BraveShield w={25} h={31} /><Indicator $w={20} $c="#3ceaf7" /></AppButton>
        </Apps>
        <Tray>
          <TrayItem $r={27}>
            <svg width="14" height="9" viewBox="0 0 14 9" fill="none" stroke="#fff" strokeWidth="1.800"><path d="M.8 8L7 1.500 13.200 8" /></svg>
          </TrayItem>
          <TrayItem $r={21}>ENG</TrayItem>
          <TrayItem $r={10}><WifiIcon /></TrayItem>
          <TrayItem $r={11}><VolumeIcon /></TrayItem>
          <TrayItem $r={19}><BatteryIcon /></TrayItem>
          <Clock>12:33<br />03/01/2024</Clock>
          <BellIcon />
        </Tray>
      </Taskbar>
    </Screen>
  );
}
